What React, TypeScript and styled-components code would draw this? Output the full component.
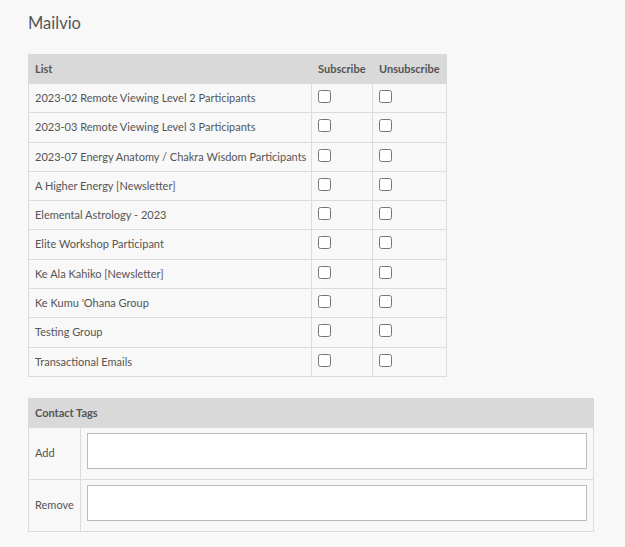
import React from "react";
import styled, { createGlobalStyle } from "styled-components";

const Global = createGlobalStyle`
  html, body { margin: 0; padding: 0; background: #f8f8f8; }
  body { font-family: Lato, "Open Sans", sans-serif; color: #555; }
`;

const Page = styled.div`
  padding: 12px 28px 16px 28px;
  display: flex;
  flex-direction: column;
  align-items: flex-start;
`;

const Title = styled.h2`
  margin: 0 0 20px 0;
  font-size: 16.5px;
  font-weight: 400;
  line-height: 22px;
  color: #555;
`;

const Table = styled.table<{ $width: number }>`
  border-collapse: collapse;
  font-size: 11px;
  color: #555;
  width: ${(p) => p.$width}px;
  table-layout: fixed;
`;

const Th = styled.th<{ $w: number }>`
  box-sizing: border-box;
  background: #d9d9d9;
  text-align: left;
  font-weight: 700;
  padding: 6px 6px;
  line-height: 16px;
  border: 1px solid #d9d9d9;
  white-space: nowrap;
  width: ${(p) => p.$w}px;
`;

const Td = styled.td`
  padding: 6px 6px;
  line-height: 16.3px;
  border: 1px solid #dcdcdc;
  vertical-align: middle;
  white-space: nowrap;
`;

const CheckCell = styled(Td)`
  vertical-align: top;
`;

const Box = styled.input`
  margin: 0;
  width: 13px;
  height: 13px;
  display: block;
`;

const InputCell = styled(Td)`
  padding: 5px 6px 10px 6px;
`;

const TextInput = styled.input`
  display: block;
  box-sizing: border-box;
  width: 100%;
  height: 36px;
  border: 1px solid #bcbcbc;
  background: #fff;
  margin: 0;
  padding: 4px 6px;
  font: inherit;
`;

const Spacer = styled.div`
  height: 21px;
`;

const lists = [
  "2023-02 Remote Viewing Level 2 Participants",
  "2023-03 Remote Viewing Level 3 Participants",
  "2023-07 Energy Anatomy / Chakra Wisdom Participants",
  "A Higher Energy [Newsletter]",
  "Elemental Astrology - 2023",
  "Elite Workshop Participant",
  "Ke Ala Kahiko [Newsletter]",
  "Ke Kumu 'Ohana Group",
  "Testing Group",
  "Transactional Emails",
];

export default function App() {
  return (
    <>
      <Global />
      <Page>
        <Title>Mailvio</Title>
        <Table $width={418}>
          <thead>
            <tr>
              <Th $w={283}>List</Th>
              <Th $w={61}>Subscribe</Th>
              <Th $w={74}>Unsubscribe</Th>
            </tr>
          </thead>
          <tbody>
            {lists.map((l) => (
              <tr key={l}>
                <Td>{l}</Td>
                <CheckCell>
                  <Box type="checkbox" />
                </CheckCell>
                <CheckCell>
                  <Box type="checkbox" />
                </CheckCell>
              </tr>
            ))}
          </tbody>
        </Table>
        <Spacer />
        <Table $width={565}>
          <thead>
            <tr>
              <Th $w={52}>Contact Tags</Th>
              <Th $w={513}></Th>
            </tr>
          </thead>
          <tbody>
            <tr>
              <Td>Add</Td>
              <InputCell>
                <TextInput type="text" />
              </InputCell>
            </tr>
            <tr>
              <Td>Remove</Td>
              <InputCell>
                <TextInput type="text" />
              </InputCell>
            </tr>
          </tbody>
        </Table>
      </Page>
    </>
  );
}
